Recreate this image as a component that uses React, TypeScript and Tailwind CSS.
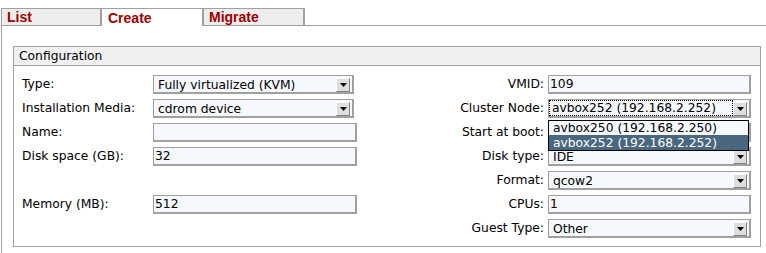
import React from "react";

const font = { fontFamily: '"DejaVu Sans", Verdana, sans-serif' };

function Arrow() {
  return (
    <div className="absolute right-[2px] top-[2px] h-[14px] w-[14px] border-t border-l border-t-white border-l-white border-r border-b border-r-[#808080] border-b-[#808080] bg-[#dedede] flex items-center justify-center">
      <svg width="7" height="4" viewBox="0 0 7 4">
        <path d="M0 0 H7 L3.5 4 Z" fill="#000" />
      </svg>
    </div>
  );
}

function Select({ value, w, focus }: { value: string; w: string; focus?: boolean }) {
  return (
    <div className={`relative h-[19px] ${w} border-t border-l border-[#a0a0a0] border-r-2 border-b-2 bg-[#f5f9fd] text-[12.3px] leading-[17px] text-black`}>
      {focus ? (
        <div className="absolute left-[0px] top-[0px] bottom-[0px] right-[16px] border border-dotted border-black pl-[2px] leading-[15px] whitespace-nowrap">
          {value}
        </div>
      ) : (
        <div className="pl-[4px] pt-[1px] whitespace-nowrap">{value}</div>
      )}
      <Arrow />
    </div>
  );
}

function Input({ value, w }: { value: string; w: string }) {
  return (
    <div className={`h-[19px] ${w} border-t border-l border-[#a0a0a0] border-r-2 border-b-2 bg-[#f5f9fd] text-[12.3px] leading-[17px] pl-[1px] text-black`}>
      {value}
    </div>
  );
}

function LeftRow({ label, children }: { label: string; children?: React.ReactNode }) {
  return (
    <div className="flex items-center h-[19px]">
      <div className="w-[131px] text-[12.3px] text-black">{label}</div>
      {children}
    </div>
  );
}

function RightRow({ label, children }: { label: string; children?: React.ReactNode }) {
  return (
    <div className="flex items-center justify-end h-[19px]">
      <div className="text-[12.3px] text-black mr-[4px] whitespace-nowrap">{label}</div>
      {children}
    </div>
  );
}

export default function App() {
  return (
    <div className="relative w-[766px] h-[253px] bg-white overflow-hidden" style={font}>
      <div className="ml-[1px] flex flex-col h-full">
        <div className="flex pt-[8px] h-[25px]" style={{ fontFamily: '"Liberation Sans", Arial, sans-serif' }}>
          <div className="w-[101px] h-[17px] border-l border-t border-[#a0a0a0] border-r-2 bg-[#eeeeee] pl-[5px] text-[14px] font-bold leading-[16px] text-[#a00000]">
            List
          </div>
          <div className="w-[102px] h-[18px] border-t border-[#a0a0a0] border-r-2 bg-white pl-[6px] pt-[1px] text-[14px] font-bold leading-[16px] text-[#a00000] relative z-10">
            Create
          </div>
          <div className="w-[101px] h-[17px] border-t border-[#a0a0a0] border-r-2 bg-[#eeeeee] pl-[5px] text-[14px] font-bold leading-[16px] text-[#a00000]">
            Migrate
          </div>
        </div>
        <div className="flex-1 border-l border-t border-[#a0a0a0] pl-[11px] pt-[20px] pr-[5px]">
          <div className="border border-[#a0a0a0]">
            <div className="h-[19px] bg-[#f0f0f0] border-b border-[#a0a0a0] pl-[5px] text-[12.3px] leading-[19px] text-black">
              Configuration
            </div>
            <div className="flex pt-[9px] pb-[8px] pl-[8px] pr-[9px]">
              <div className="flex flex-col gap-[5px]">
                <LeftRow label="Type:">
                  <Select value="Fully virtualized (KVM)" w="w-[201px]" />
                </LeftRow>
                <LeftRow label="Installation Media:">
                  <Select value="cdrom device" w="w-[201px]" />
                </LeftRow>
                <LeftRow label="Name:">
                  <Input value="" w="w-[204px]" />
                </LeftRow>
                <LeftRow label="Disk space (GB):">
                  <Input value="32" w="w-[204px]" />
                </LeftRow>
                <LeftRow label="" />
                <LeftRow label="Memory (MB):">
                  <Input value="512" w="w-[204px]" />
                </LeftRow>
              </div>
              <div className="ml-auto flex flex-col gap-[5px]">
                <RightRow label="VMID:">
                  <Input value="109" w="w-[203px]" />
                </RightRow>
                <RightRow label="Cluster Node:">
                  <Select value="avbox252 (192.168.2.252)" w="w-[203px]" focus />
                </RightRow>
                <RightRow label="Start at boot:">
                  <Select value="" w="w-[203px]" />
                </RightRow>
                <RightRow label="Disk type:">
                  <Select value="IDE" w="w-[203px]" />
                </RightRow>
                <RightRow label="Format:">
                  <Select value="qcow2" w="w-[203px]" />
                </RightRow>
                <RightRow label="CPUs:">
                  <Input value="1" w="w-[203px]" />
                </RightRow>
                <RightRow label="Guest Type:">
                  <Select value="Other" w="w-[203px]" />
                </RightRow>
              </div>
            </div>
          </div>
        </div>
      </div>
      <div className="absolute left-[548px] top-[120px] w-[201px] border border-black bg-[#f5f9fd] text-[12.3px] leading-[14px] z-20">
        <div className="h-[14px] pl-[4px] text-black">avbox250 (192.168.2.250)</div>
        <div className="h-[15px] pl-[4px] pt-[1px] bg-[#4a6780] text-white">avbox252 (192.168.2.252)</div>
      </div>
    </div>
  );
}
